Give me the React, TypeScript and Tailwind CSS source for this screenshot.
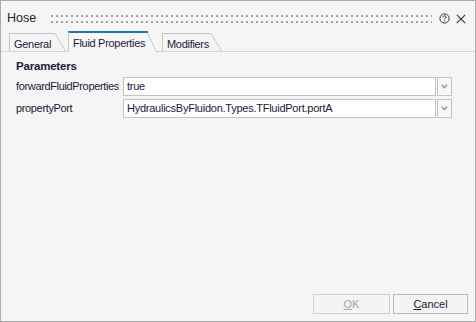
import React from "react";

const font = { fontFamily: '"Liberation Sans", Arial, sans-serif' };

function Chevron() {
  return (
    <svg width="7" height="5" viewBox="0 0 7 5">
      <polyline points="0.8,0.8 3.5,3.6 6.2,0.8" fill="none" stroke="#9a9a9a" strokeWidth="1.6" />
    </svg>
  );
}

function Row({ label, value }: { label: string; value: string }) {
  return (
    <div className="flex items-center h-[19px]">
      <div className="w-[107px] text-[11px] tracking-[-0.35px] text-[#1c2036] whitespace-nowrap">{label}</div>
      <div className="w-[313px] h-[19px] border border-[#c3c3c3] bg-white flex items-center pl-[3px] text-[11px] tracking-[-0.25px] text-[#1c2036] whitespace-nowrap">
        {value}
      </div>
      <div className="w-[15px] h-[19px] border border-[#c3c3c3] bg-[#f7f7f7] flex items-center justify-center ml-px">
        <Chevron />
      </div>
    </div>
  );
}

function Tab({ label, width, active, slant }: { label: string; width: number; active?: boolean; slant: number }) {
  const h = active ? 21 : 18;
  return (
    <div className={active ? "flex h-[21px] -mb-px bg-[#f7f7f7] relative z-10" : "flex h-[18px]"}>
      <div
        className={
          active
            ? "border-l border-t-2 border-l-[#c6c6c6] border-t-[#1b78b4] pl-[4px] text-[11px] tracking-[-0.3px] text-[#1c2036] whitespace-nowrap pt-[2px]"
            : "border-l border-t border-[#c6c6c6] pl-[4px] text-[11px] tracking-[-0.3px] text-[#1c2036] whitespace-nowrap pt-[2px]"
        }
        style={{ width }}
      >
        {label}
      </div>
      <svg width={slant} height={h} className="block">
        <line x1="0" y1={active ? 1 : 0.5} x2={slant - 0.5} y2={h} stroke="#c6c6c6" strokeWidth="1" />
        {active ? <line x1="0" y1="1" x2="1" y2="1" stroke="#1b78b4" strokeWidth="2" /> : null}
      </svg>
    </div>
  );
}

export default function App() {
  return (
    <div className="w-[476px] h-[322px] border border-[#ababab] bg-[#f5f5f5] flex flex-col" style={font}>
      {/* title bar */}
      <div className="h-[30px] flex items-start pt-[10px] pl-[6px] pr-[9px]">
        <div className="text-[12.5px] text-[#1f2336] leading-[14px] w-[44px]">Hose</div>
        <svg className="flex-1 h-[8px] mt-[4px]" height="8">
          <defs>
            <pattern id="grip" width="5" height="6" patternUnits="userSpaceOnUse">
              <rect x="0" y="0" width="2" height="2" fill="#a2a2a2" />
            </pattern>
          </defs>
          <rect x="0" y="0" width="100%" height="8" fill="url(#grip)" />
        </svg>
        <div className="flex items-center gap-[6px] ml-[7px] mt-[2px]">
          <svg width="11" height="11" viewBox="0 0 11 11">
            <circle cx="5.5" cy="5.5" r="4.6" fill="none" stroke="#333" strokeWidth="1" />
            <path d="M3.9 4.4 C3.9 3.3 4.6 2.8 5.5 2.8 C6.4 2.8 7.1 3.4 7.1 4.2 C7.1 5.1 5.6 5.3 5.6 6.4" fill="none" stroke="#333" strokeWidth="1" />
            <rect x="5.1" y="7.3" width="1" height="1" fill="#333" />
          </svg>
          <svg width="10" height="10" viewBox="0 0 10 10">
            <line x1="0.8" y1="0.8" x2="9.2" y2="9.2" stroke="#333" strokeWidth="1.1" />
            <line x1="9.2" y1="0.8" x2="0.8" y2="9.2" stroke="#333" strokeWidth="1.1" />
          </svg>
        </div>
      </div>

      {/* tabs */}
      <div className="flex items-end h-[21px] border-b border-[#d4d4d4] pl-[8px]">
        <Tab label="General" width={46} slant={11} />
        <div className="w-[2px]" />
        <Tab label="Fluid Properties" width={79} slant={10} active />
        <div className="w-[5px]" />
        <Tab label="Modifiers" width={49} slant={11} />
      </div>

      {/* content */}
      <div className="flex flex-col pl-[15px] pt-[7px]">
        <div className="text-[11.5px] font-bold leading-[14px] tracking-[-0.2px] text-[#1c2036]">Parameters</div>
        <div className="flex flex-col gap-[3px] mt-[4px]">
          <Row label="forwardFluidProperties" value="true" />
          <Row label="propertyPort" value="HydraulicsByFluidon.Types.TFluidPort.portA" />
        </div>
      </div>

      <div className="flex-1" />

      {/* buttons */}
      <div className="flex justify-end gap-[3px] pr-[7px] pb-[7px]">
        <button className="w-[77px] h-[20px] border border-[#cfcfcf] bg-[#f4f4f4] text-[11px] text-[#a3a3a3] flex items-center justify-center">
          <span><span className="underline">O</span>K</span>
        </button>
        <button className="w-[75px] h-[20px] border border-[#b9b9b9] bg-[#f4f4f4] text-[11px] text-[#1c2036] flex items-center justify-center">
          <span><span className="underline">C</span>ancel</span>
        </button>
      </div>
    </div>
  );
}
